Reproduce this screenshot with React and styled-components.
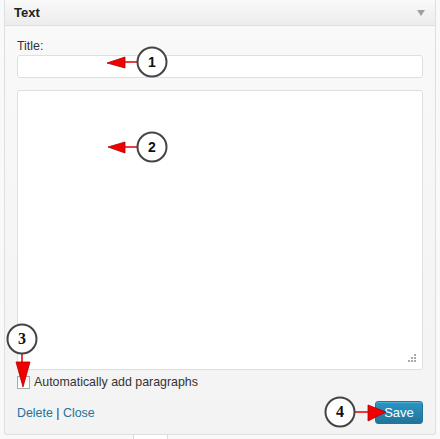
import React from "react";
import styled, { createGlobalStyle } from "styled-components";

const GlobalStyle = createGlobalStyle`
  html, body {
    margin: 0;
    padding: 0;
    background: #f9f9f9;
  }
  body {
    font-family: "Liberation Sans", Arial, sans-serif;
    font-size: 12.4px;
    color: #333;
  }
`;

const Page = styled.div`
  position: relative;
  width: 440px;
  height: 439px;
  overflow: hidden;
  padding: 0 4px;
  box-sizing: border-box;
`;

const Widget = styled.div`
  border: 1px solid #dfdfdf;
  border-top: none;
  border-radius: 0 0 3px 3px;
  background: linear-gradient(to bottom, #f9f9f9 0%, #f3f3f3 100%);
`;

const Header = styled.div`
  height: 25px;
  display: flex;
  align-items: center;
  justify-content: space-between;
  padding: 0 9px;
  background: linear-gradient(to bottom, #f9f9f9, #ececec);
  border-bottom: 1px solid #dfdfdf;
  font-weight: bold;
  font-size: 13px;
  color: #222;
`;

const Toggle = styled.span`
  width: 0;
  height: 0;
  border-left: 4px solid transparent;
  border-right: 4px solid transparent;
  border-top: 6px solid #a0a0a0;
  margin-right: 1px;
`;

const Inside = styled.div`
  padding: 13px 12px 10px;
`;

const Label = styled.label`
  display: block;
  line-height: 15px;
  margin-bottom: 1px;
  color: #333;
`;

const TextInput = styled.div`
  height: 21px;
  background: #fff;
  border: 1px solid #dfdfdf;
  border-radius: 3px;
`;

const TextArea = styled.div`
  position: relative;
  margin-top: 12px;
  height: 278px;
  background: #fff;
  border: 1px solid #dfdfdf;
  border-radius: 3px;
`;

const Grip = styled.svg`
  position: absolute;
  right: 5px;
  bottom: 6px;
`;

const CheckRow = styled.div`
  display: flex;
  align-items: center;
  height: 16px;
  margin-top: 4px;
  gap: 4px;
`;

const Check = styled.span`
  width: 11px;
  height: 11px;
  border: 1px solid #aaa;
  background: linear-gradient(#f3f3f3, #fff);
`;

const Footer = styled.div`
  display: flex;
  align-items: center;
  justify-content: space-between;
  margin-top: 11px;
  height: 23px;
`;

const Links = styled.div`
  color: #333;
  a {
    color: #21759b;
    text-decoration: none;
  }
`;

const SaveButton = styled.button`
  height: 23px;
  width: 48px;
  padding: 0;
  border: 1px solid #21759b;
  border-radius: 3px;
  background: linear-gradient(to bottom, #2a95c5, #21759b);
  color: #fff;
  font-family: "Liberation Sans", Arial, sans-serif;
  font-size: 13px;
  box-shadow: inset 0 1px 0 rgba(120, 200, 230, 0.5);
`;

const Below = styled.div`
  display: flex;
  height: 4px;
  padding-left: 129px;
`;

const Tab = styled.span`
  width: 33px;
  background: #fff;
  border-left: 1px solid #dcdcdc;
  border-right: 1px solid #dcdcdc;
`;

const Notes = styled.svg`
  position: absolute;
  left: 0;
  top: 0;
  pointer-events: none;
`;

const callouts = [
  { n: "1", cx: 152, cy: 62, serif: false, line: [137, 62, 125, 62], head: "125,57 125,68 107,63" },
  { n: "2", cx: 152, cy: 147, serif: false, line: [137, 147, 125, 147], head: "125,142 125,153 108,147" },
  { n: "3", cx: 22, cy: 339, serif: true, line: [22, 353, 22, 362], head: "16,362 30,362 23,387" },
  { n: "4", cx: 340, cy: 412, serif: true, line: [355, 412, 368, 412], head: "368,405 368,421 386,412" },
];

const Callouts = () => (
  <Notes width="440" height="439">
    {callouts.map((c) => (
      <g key={c.n}>
        <line
          x1={c.line[0]}
          y1={c.line[1]}
          x2={c.line[2]}
          y2={c.line[3]}
          stroke="#e00000"
          strokeWidth="1.5"
        />
        <polygon points={c.head} fill="#f00000" stroke="#b00000" strokeWidth="0.8" />
        <circle cx={c.cx} cy={c.cy} r="14.5" fill="#fff" stroke="#444" strokeWidth="2" />
        <text
          x={c.cx}
          y={c.cy + 5}
          textAnchor="middle"
          fontSize={c.serif ? 16 : 14}
          fontWeight="bold"
          fontFamily={c.serif ? "Liberation Serif, serif" : "Liberation Sans, sans-serif"}
          fill="#111"
        >
          {c.n}
        </text>
      </g>
    ))}
  </Notes>
);

export default function App() {
  return (
    <>
      <GlobalStyle />
      <Page>
        <Widget>
          <Header>
            <span>Text</span>
            <Toggle />
          </Header>
          <Inside>
            <Label>Title:</Label>
            <TextInput />
            <TextArea>
              <Grip width="9" height="9" viewBox="0 0 9 9">
                <rect x="6" y="0" width="2" height="2" fill="#aaa" />
                <rect x="3" y="3" width="2" height="2" fill="#aaa" />
                <rect x="6" y="3" width="2" height="2" fill="#aaa" />
                <rect x="0" y="6" width="2" height="2" fill="#aaa" />
                <rect x="3" y="6" width="2" height="2" fill="#aaa" />
                <rect x="6" y="6" width="2" height="2" fill="#aaa" />
              </Grip>
            </TextArea>
            <CheckRow>
              <Check />
              <span>Automatically add paragraphs</span>
            </CheckRow>
            <Footer>
              <Links>
                <a href="#delete">Delete</a> | <a href="#close">Close</a>
              </Links>
              <SaveButton>Save</SaveButton>
            </Footer>
          </Inside>
        </Widget>
        <Below>
          <Tab />
        </Below>
        <Callouts />
      </Page>
    </>
  );
}
